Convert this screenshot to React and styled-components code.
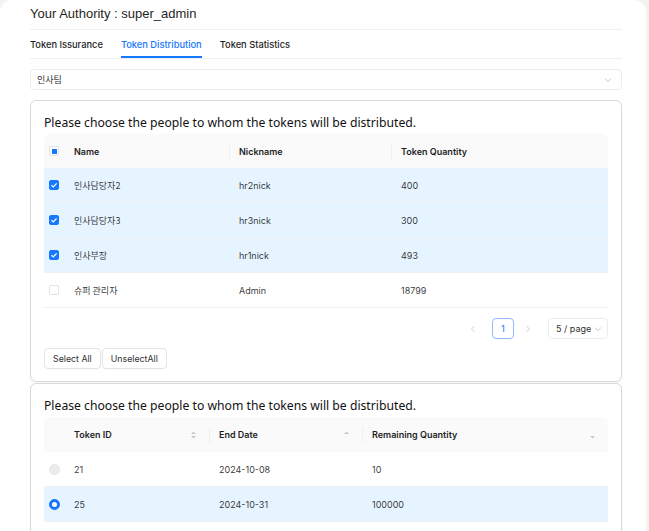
import React from 'react';
import styled, { createGlobalStyle, css } from 'styled-components';

const GlobalStyle = createGlobalStyle`
  html, body {
    margin: 0;
    padding: 0;
    background: #f3f3f4;
  }
  body {
    font-family: Inter, "Noto Sans", "Noto Sans CJK KR", sans-serif;
    color: rgba(0, 0, 0, 0.88);
  }
  * {
    box-sizing: border-box;
  }
`;

const Page = styled.div`
  width: 646px;
  min-height: 531px;
  background: #ffffff;
  border-radius: 12px 12px 0 0;
  padding: 4px 24px 0 30px;
  overflow: hidden;
`;

const Title = styled.div`
  font-family: "Liberation Sans", Arial, sans-serif;
  font-size: 13px;
  line-height: 20px;
  color: #1f1f1f;
  padding-bottom: 5px;
  border-bottom: 1px solid #f0f0f0;
`;

const Tabs = styled.div`
  display: flex;
  gap: 18px;
  border-bottom: 1px solid #f0f0f0;
  height: 29px;
`;

const Tab = styled.div`
  font-size: 9.3px;
  font-weight: 500;
  line-height: 28px;
  padding-top: 1px;
  color: ${(p) => (p.active ? '#1677ff' : '#1f1f1f')};
  border-bottom: 2px solid ${(p) => (p.active ? '#1677ff' : 'transparent')};
`;

const Select = styled.div`
  margin-top: 10px;
  height: 21px;
  border: 1px solid #ececec;
  border-radius: 4px;
  display: flex;
  align-items: center;
  justify-content: space-between;
  padding: 0 8px 0 6px;
  font-size: 9px;
  font-family: "Noto Sans CJK KR", sans-serif;
  color: #333;
`;

const Card = styled.div`
  margin-top: ${(p) => p.gap}px;
  border: 1px solid #d9d9d9;
  border-radius: 6px;
  padding: 13px 13px 12px 13px;
  box-shadow: 0 1px 2px rgba(0, 0, 0, 0.04);
`;

const CardTitle = styled.div`
  font-family: "Noto Sans", sans-serif;
  font-size: 12.2px;
  line-height: 15px;
  color: #111;
  padding-top: 1px;
  margin-bottom: 4px;
`;

const Row = styled.div`
  display: grid;
  grid-template-columns: ${(p) => p.cols};
  height: ${(p) => p.h}px;
  align-items: center;
  font-size: 9px;
  color: rgba(0, 0, 0, 0.8);
  border-bottom: 1px solid #f0f0f0;
  background: ${(p) => (p.selected ? '#e6f4ff' : '#ffffff')};
  ${(p) =>
    p.header &&
    css`
      background: #fafafa;
      font-weight: 600;
      color: #1f1f1f;
      border-radius: 6px 6px 0 0;
      border-bottom: none;
    `}
`;

const Cell = styled.div`
  position: relative;
  display: flex;
  align-items: center;
  justify-content: ${(p) => (p.center ? 'center' : 'space-between')};
  padding: 0 ${(p) => (p.center ? 0 : 12)}px 0 ${(p) => (p.center ? 0 : 10)}px;
  font-family: ${(p) => (p.ko ? '"Noto Sans CJK KR", sans-serif' : 'inherit')};
  height: 100%;
  ${(p) =>
    p.sep &&
    css`
      &::before {
        content: '';
        position: absolute;
        left: 0;
        top: 50%;
        height: 16px;
        margin-top: -8px;
        width: 1px;
        background: #f0f0f0;
      }
    `}
`;

const Check = styled.span`
  width: 10px;
  height: 10px;
  border-radius: 2px;
  border: 1px solid ${(p) => (p.checked ? '#1677ff' : '#e3e3e3')};
  background: ${(p) => (p.checked ? '#1677ff' : '#fff')};
  display: flex;
  align-items: center;
  justify-content: center;
`;

const Indeterminate = styled.span`
  width: 5px;
  height: 5px;
  background: #1677ff;
`;

const Radio = styled.span`
  width: 11px;
  height: 11px;
  border-radius: 50%;
  background: ${(p) => (p.checked ? '#1677ff' : '#ececec')};
  border: 1px solid ${(p) => (p.checked ? '#1677ff' : '#e6e6e6')};
  display: flex;
  align-items: center;
  justify-content: center;
  &::after {
    content: '';
    display: ${(p) => (p.checked ? 'block' : 'none')};
    width: 5px;
    height: 5px;
    border-radius: 50%;
    background: #fff;
  }
`;

const Pager = styled.div`
  display: flex;
  justify-content: flex-end;
  align-items: center;
  margin-top: 10px;
  height: 21px;
  font-size: 9.5px;
`;

const PageArrow = styled.span`
  width: 22px;
  display: flex;
  justify-content: center;
  margin: 0 ${(p) => p.mr}px 0 0;
  color: #c4c4c4;
`;

const PageNum = styled.span`
  width: 22px;
  height: 21px;
  margin-right: 3px;
  border: 1px solid #91b9fb;
  border-radius: 4px;
  color: #1677ff;
  display: flex;
  align-items: center;
  justify-content: center;
`;

const SizeSelect = styled.span`
  width: 60px;
  height: 21px;
  border: 1px solid #ececec;
  border-radius: 4px;
  display: flex;
  align-items: center;
  justify-content: space-between;
  padding: 0 4px 0 7px;
  white-space: nowrap;
  font-size: 9px;
  color: #333;
`;

const Buttons = styled.div`
  display: flex;
  gap: 1px;
  margin-top: 9px;
`;

const Button = styled.button`
  height: 21px;
  padding: 0 ${(p) => p.px}px;
  border: 1px solid #e4e4e4;
  border-radius: 4px;
  background: #fff;
  font-family: Inter, sans-serif;
  font-size: 8.8px;
  color: #333;
  box-shadow: 0 1px 0 rgba(0, 0, 0, 0.02);
`;

const Chevron = ({ color = '#bfbfbf', dir = 'down' }) => {
  const d = {
    down: 'M2 3.5 L5 6.5 L8 3.5',
    left: 'M6.5 2 L3.5 5 L6.5 8',
    right: 'M3.5 2 L6.5 5 L3.5 8',
  }[dir];
  return (
    <svg width="10" height="10" viewBox="0 0 10 10">
      <path d={d} fill="none" stroke={color} strokeWidth="0.9" />
    </svg>
  );
};

const Tick = () => (
  <svg width="8" height="8" viewBox="0 0 8 8">
    <path d="M1.5 4.2 L3.3 5.9 L6.6 2.4" fill="none" stroke="#fff" strokeWidth="1.3" />
  </svg>
);

const Sorter = ({ up = true, down = true }) => (
  <svg width="7" height="10" viewBox="0 0 7 10">
    {up && <path d="M1 4 L3.5 1.5 L6 4 Z" fill="#c8c8c8" />}
    {down && <path d="M1 6 L3.5 8.5 L6 6 Z" fill="#c8c8c8" />}
  </svg>
);

const people = [
  { name: '인사담당자2', nick: 'hr2nick', qty: 400, checked: true },
  { name: '인사담당자3', nick: 'hr3nick', qty: 300, checked: true },
  { name: '인사부장', nick: 'hr1nick', qty: 493, checked: true },
  { name: '슈퍼 관리자', nick: 'Admin', qty: 18799, checked: false },
];

const tokens = [
  { id: 21, end: '2024-10-08', remain: 10, checked: false },
  { id: 25, end: '2024-10-31', remain: 100000, checked: true },
];

const peopleCols = '20px 165px 162px 1fr';
const tokenCols = '20px 145px 153px 1fr';

const App = () => (
  <Page>
    <GlobalStyle />
    <Title>Your Authority : super_admin</Title>
    <Tabs>
      <Tab>Token Issurance</Tab>
      <Tab active>Token Distribution</Tab>
      <Tab>Token Statistics</Tab>
    </Tabs>
    <Select>
      인사팀
      <Chevron />
    </Select>

    <Card gap={10}>
      <CardTitle>Please choose the people to whom the tokens will be distributed.</CardTitle>
      <Row header cols={peopleCols} h={34}>
        <Cell center>
          <Check>
            <Indeterminate />
          </Check>
        </Cell>
        <Cell>Name</Cell>
        <Cell sep>Nickname</Cell>
        <Cell sep>Token Quantity</Cell>
      </Row>
      {people.map((p) => (
        <Row key={p.nick} cols={peopleCols} h={35} selected={p.checked}>
          <Cell center>
            <Check checked={p.checked}>{p.checked && <Tick />}</Check>
          </Cell>
          <Cell ko>{p.name}</Cell>
          <Cell>{p.nick}</Cell>
          <Cell>{p.qty}</Cell>
        </Row>
      ))}
      <Pager>
        <PageArrow mr={8}>
          <Chevron dir="left" color="#c8c8c8" />
        </PageArrow>
        <PageNum>1</PageNum>
        <PageArrow mr={9}>
          <Chevron dir="right" color="#c8c8c8" />
        </PageArrow>
        <SizeSelect>
          5 / page
          <Chevron />
        </SizeSelect>
      </Pager>
      <Buttons>
        <Button px={8}>Select All</Button>
        <Button px={8}>UnselectAll</Button>
      </Buttons>
    </Card>

    <Card gap={1}>
      <CardTitle>Please choose the people to whom the tokens will be distributed.</CardTitle>
      <Row header cols={tokenCols} h={35}>
        <Cell center />
        <Cell>
          Token ID
          <Sorter />
        </Cell>
        <Cell sep>
          End Date
          <Sorter down={false} />
        </Cell>
        <Cell sep>
          Remaining Quantity
          <Sorter up={false} />
        </Cell>
      </Row>
      {tokens.map((t) => (
        <Row key={t.id} cols={tokenCols} h={35} selected={t.checked}>
          <Cell center>
            <Radio checked={t.checked} />
          </Cell>
          <Cell>{t.id}</Cell>
          <Cell>{t.end}</Cell>
          <Cell>{t.remain}</Cell>
        </Row>
      ))}
    </Card>
  </Page>
);

export default App;
